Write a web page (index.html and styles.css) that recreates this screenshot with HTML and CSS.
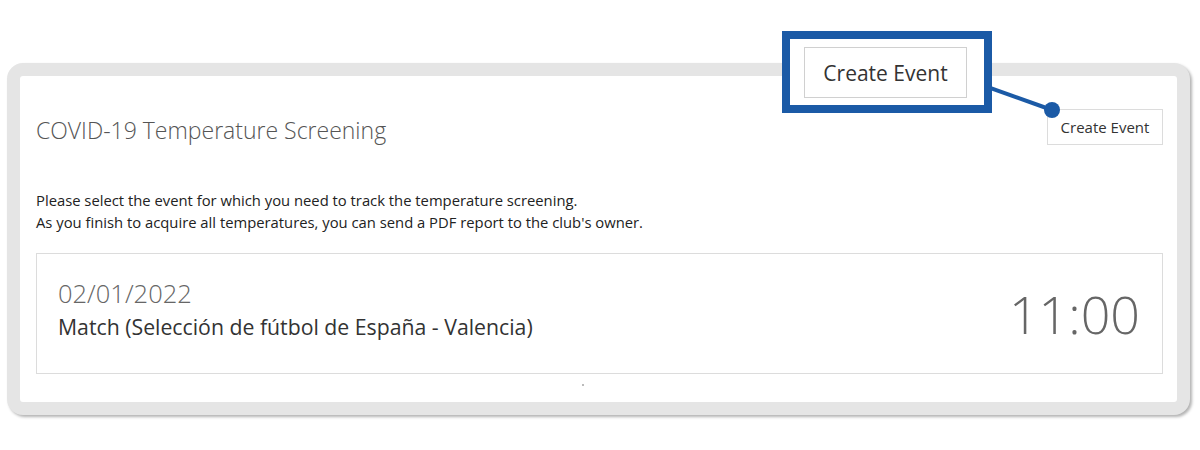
FILE: index.html
```html
<!DOCTYPE html>
<html lang="en">
<head>
  <meta charset="utf-8">
  <title>COVID-19 Temperature Screening</title>
  <link rel="stylesheet" href="styles.css">
</head>
<body>
  <div class="page">
    <div class="frame">
      <div class="panel">
        <div class="panel-header">
          <h1 class="panel-title">COVID-19 Temperature Screening</h1>
          <button class="btn-small">Create Event</button>
        </div>

        <p class="intro">
          Please select the event for which you need to track the temperature screening.<br>
          As you finish to acquire all temperatures, you can send a PDF report to the club's owner.
        </p>

        <div class="event-card">
          <div class="event-info">
            <div class="event-date">02/01/2022</div>
            <div class="event-name">Match (Selección de fútbol de España - Valencia)</div>
          </div>
          <div class="event-time">11:00</div>
        </div>

        <div class="pager-dot"></div>
      </div>
    </div>

    <!-- zoomed callout of the button -->
    <div class="callout">
      <div class="btn-big">Create Event</div>
    </div>
    <svg class="callout-link" width="80" height="40" viewBox="0 0 80 40">
      <line x1="0" y1="8" x2="62" y2="30" stroke="#1b5aa6" stroke-width="4"/>
      <circle cx="62" cy="30" r="8" fill="#1b5aa6"/>
    </svg>
  </div>
</body>
</html>
```

FILE: styles.css
```css
body {
  margin: 0;
  padding: 0;
  background: #fff;
  font-family: 'Open Sans', 'Liberation Sans', sans-serif;
  color: #222;
}

.page {
  position: relative;
  width: 1200px;
  height: 450px;
  overflow: hidden;
}

.frame {
  margin: 63px 10px 0 7px;
  height: 326px;
  border: 13px solid #e5e5e5;
  border-radius: 16px;
  background: #fff;
  box-shadow: 2px 2px 3px rgba(0, 0, 0, 0.3);
}

.panel {
  padding: 0 14px 0 16px;
}

.panel-header {
  display: flex;
  justify-content: space-between;
  align-items: flex-end;
  padding-top: 33px;
}

.panel-title {
  margin: 0 0 -3px;
  font-size: 23px;
  font-weight: 300;
  line-height: 35px;
  color: #555;
}

.btn-small {
  width: 116px;
  height: 36px;
  padding: 0;
  background: #fff;
  border: 1px solid #dcdcdc;
  font-family: inherit;
  font-size: 15px;
  color: #333;
}

.intro {
  margin: 44px 0 0;
  font-size: 14.8px;
  line-height: 22px;
  color: #222;
}

.event-card {
  display: flex;
  justify-content: space-between;
  align-items: center;
  margin-top: 20px;
  height: 119px;
  padding: 0 22px 0 21px;
  border: 1px solid #dcdcdc;
}

.event-info {
  padding-bottom: 9px;
}

.event-date {
  font-size: 25.5px;
  font-weight: 300;
  line-height: 32px;
  color: #666;
}

.event-name {
  margin-top: 4px;
  font-size: 21.25px;
  line-height: 28px;
  color: #333;
}

.event-time {
  font-size: 52px;
  font-weight: 300;
  color: #666;
}

.pager-dot {
  width: 2px;
  height: 2px;
  margin: 10px 0 0 546px;
  background: #bbb;
}

/* ---------- callout ---------- */
.callout {
  position: absolute;
  left: 782px;
  top: 31px;
  width: 180px;
  height: 58px;
  border: 8px solid #1b5aa6;
  background: #fff;
  padding: 8px 0 0 14px;
}

.btn-big {
  display: flex;
  justify-content: center;
  align-items: center;
  width: 161px;
  height: 49px;
  border: 1px solid #d0d0d0;
  font-size: 21px;
  color: #333;
}

.callout-link {
  position: absolute;
  left: 990px;
  top: 80px;
}
```
